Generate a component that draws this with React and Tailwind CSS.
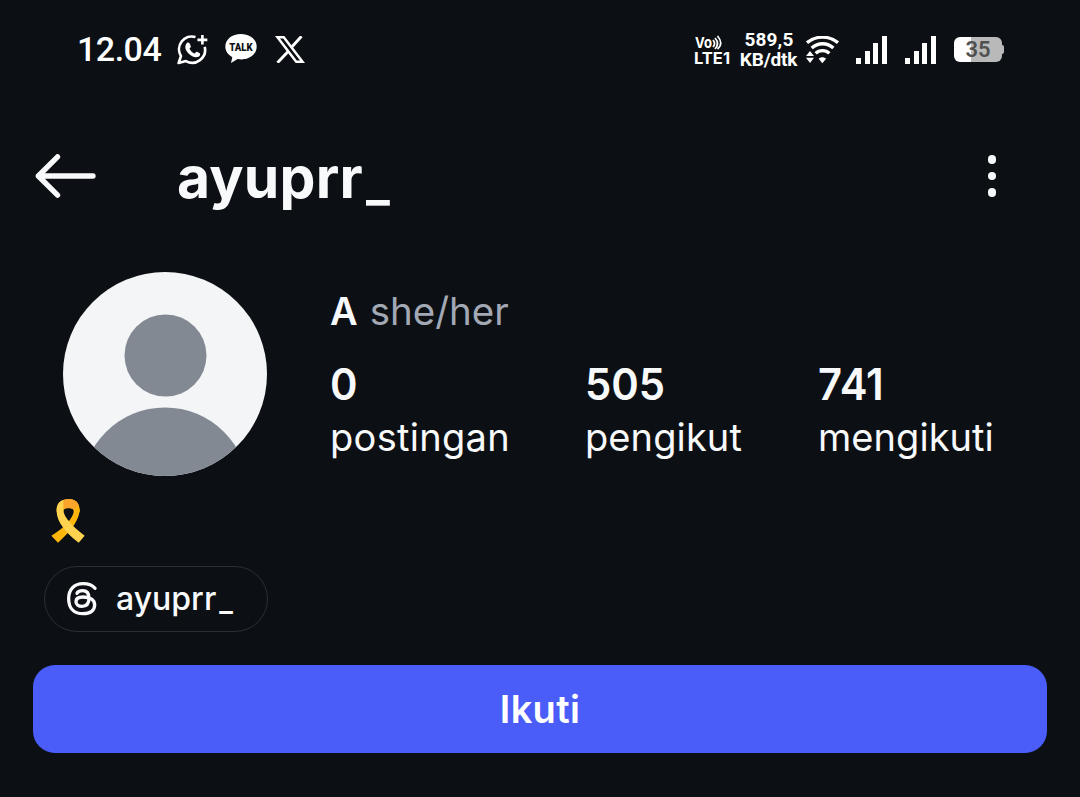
const stats = [
  { value: '0', label: 'postingan', width: 'w-[255px]', labelSpacing: 'tracking-[0.3px]' },
  { value: '505', label: 'pengikut', width: 'w-[233px]', labelSpacing: 'tracking-[0.1px]' },
  { value: '741', label: 'mengikuti', width: 'w-[200px]', labelSpacing: 'tracking-[0.05px]' },
];

function WhatsAppIcon() {
  return (
    <svg viewBox="0 0 94 92" className="h-[31px] w-[31px]" fill="none" stroke="white">
      <path d="M56 8 A39 39 0 0 0 12 66 L5 87 L27 81 A39 39 0 0 0 84 38" strokeWidth="8" strokeLinejoin="round" />
      <path d="M77 2 V31 M62 17 H92" strokeWidth="8" />
      <path
        d="M30 26 C32 24 36 24 38 27 L42 36 C43 39 38 42 38 44 C41 51 47 56 53 58 C56 58 57 52 61 53 L69 57 C72 60 69 66 65 68 C56 72 44 67 35 58 C26 48 21 37 30 26 Z"
        fill="white"
        stroke="none"
      />
    </svg>
  );
}

function TalkIcon() {
  return (
    <svg viewBox="0 0 96 90" className="h-[30px] w-[32px]" fill="white">
      <path d="M48 0 C21 0 1 16 1 38 C1 51 9 62 22 69 L18 87 L38 75 C70 81 95 63 95 38 C95 16 75 0 48 0 Z" />
      <text x="48" y="51" textAnchor="middle" textLength="70" lengthAdjust="spacingAndGlyphs" className="fill-[#0c1014] font-[Roboto] text-[35px] font-black">
        TALK
      </text>
    </svg>
  );
}

function XIcon() {
  return (
    <svg viewBox="0 0 90 82" className="h-[27px] w-[30px]" fill="none" stroke="white">
      <path d="M7 4 H26 L83 78 H64 Z" strokeWidth="7.5" />
      <path d="M80 1 L49 35 M40 46 L7 81" strokeWidth="9" />
    </svg>
  );
}

function WifiIcon() {
  return (
    <svg viewBox="0 0 99 84" className="h-[28px] w-[33px]" fill="none" stroke="white" strokeWidth="10">
      <path d="M3 20 C30 -2 69 -2 96 20" />
      <path d="M17 36 C36 19 64 19 82 36" />
      <path d="M29 52 C40 41 59 41 70 52" />
      <path d="M38 68 C44 62 54 62 60 68 L49 82 Z" fill="white" stroke="none" />
      <path d="M12 45 L24 60 H0 Z M0 65 H24 L12 81 Z" fill="white" stroke="none" />
    </svg>
  );
}

function SignalIcon() {
  return (
    <div className="flex h-7 w-[31px] items-end justify-between">
      <span className="h-1.5 w-[5px] bg-white" />
      <span className="h-[13px] w-[5px] bg-white" />
      <span className="h-[21px] w-[5px] bg-white" />
      <span className="h-7 w-[5px] bg-white" />
    </div>
  );
}

function ThreadsIcon() {
  return (
    <svg viewBox="0 0 93 102" className="h-[34px] w-[31px]" fill="none" stroke="#f8f9fa" strokeWidth="10" strokeLinecap="round">
      <path d="M84 19 C76 9 63 5 48 5 C22 5 5 22 5 50 C5 79 22 95 48 95 C70 95 83 85 83 69 C83 54 70 45 48 45 C34 45 27 51 27 59 C27 68 35 73 45 73 C58 73 66 65 66 49 C66 34 60 26 47 26 C38 26 32 29 30 34" />
    </svg>
  );
}

function RibbonIcon() {
  return (
    <svg viewBox="0 0 100 132" className="h-[44px] w-[34px]">
      <path d="M85 30 C85 61 62 93 20 131 L0 110 C30 92 46 76 53 66 C61 55 68 45 68 30 Z" fill="#ffb60c" />
      <path d="M16 38 C14 12 30 0 51 0 C72 0 87 12 85 40 L67 40 C69 31 64 28 52 28 C39 28 36 31 36 40 Z" fill="#ffb60c" />
      <path d="M36 4 C53 -4 76 1 82 18 L68 32 C62 26 43 26 36 31 Z" fill="#fba52c" />
      <path d="M16 38 C15 18 23 7 36 4 L36 31 C36 45 45 58 53 67 C65 82 80 95 100 110 L82 131 C40 98 17 67 16 38 Z" fill="#ffd34f" />
    </svg>
  );
}

function StatusBar() {
  return (
    <div className="flex h-[98px] items-center pr-[76px] pl-[77px] text-white">
      <span className="w-[100px] font-[Roboto] text-[34px] leading-none font-medium tracking-[-0.5px]">12.04</span>
      <WhatsAppIcon />
      <div className="ml-[17px]"><TalkIcon /></div>
      <div className="ml-[18px]"><XIcon /></div>

      <div className="ml-auto flex items-center pt-px">
        <svg viewBox="0 0 36 30" className="mr-[9px] h-[30px] w-9 overflow-visible font-[Inter] font-bold" fill="white">
          <text x="0" y="13" textLength="17" lengthAdjust="spacingAndGlyphs" className="text-[15px]">Vo</text>
          <path d="M18 5 Q21 8.5 18 12 M20 3 Q25 8.5 20 14 M22.5 1 Q29 8.5 22.5 14" fill="none" stroke="white" strokeWidth="1.7" />
          <text x="-1" y="28.5" textLength="36" lengthAdjust="spacingAndGlyphs" className="text-[16px]">LTE1</text>
        </svg>
        <div className="w-[58px] text-center font-[Roboto] text-[19px] leading-[20px] font-bold">
          <div className="tracking-[0.1px]">589,5</div>
          <div className="-ml-px tracking-[-0.2px]">KB/dtk</div>
        </div>
        <div className="ml-2"><WifiIcon /></div>
        <div className="ml-[17px]"><SignalIcon /></div>
        <div className="ml-[18px]"><SignalIcon /></div>
        <div className="ml-[18px] flex items-center">
          <div className="flex h-[25px] w-12 items-center justify-center rounded-[6px] bg-linear-to-r from-white from-36% to-[#b9b9b9] to-36% font-[Roboto] text-[22px] leading-none font-semibold text-[#505050]">
            35
          </div>
          <div className="h-[9px] w-[2px] rounded-r-[2px] bg-[#b9b9b9]" />
        </div>
      </div>
    </div>
  );
}

function Header() {
  return (
    <header className="mt-0.5 flex h-[152px] items-center pr-[84px] pl-[35px]">
      <svg viewBox="0 0 184 132" className="h-[44px] w-[61px]" fill="none" stroke="#f8f9fa" strokeWidth="16" strokeLinecap="round" strokeLinejoin="round">
        <path d="M68 8 L10 66 L68 124 M10 66 H175" />
      </svg>
      <h1 className="ml-[81px] pt-[3px] text-[57px] leading-none font-bold tracking-[0.2px]">
        ayuprr<span className="ml-[3px] align-[-2px] text-[50px] leading-none">_</span>
      </h1>
      <div className="ml-auto flex flex-col gap-2">
        <span className="h-[8.5px] w-[8.5px] rounded-full bg-[#f8f9fa]" />
        <span className="h-[8.5px] w-[8.5px] rounded-full bg-[#f8f9fa]" />
        <span className="h-[8.5px] w-[8.5px] rounded-full bg-[#f8f9fa]" />
      </div>
    </header>
  );
}

function Avatar() {
  return (
    <svg viewBox="0 0 204 204" className="h-[204px] w-[204px] shrink-0 rounded-full bg-[#f3f5f7]">
      <circle cx="102.5" cy="83.5" r="41" fill="#838993" />
      <circle cx="102" cy="219" r="83.5" fill="#838993" />
    </svg>
  );
}

export default function App() {
  return (
    <div className="flex h-[797px] w-[1080px] flex-col overflow-hidden bg-[#0c1014] font-['Inter',sans-serif] text-[#f8f9fa]">
      <StatusBar />
      <Header />

      <section className="mt-5 flex pl-[63px]">
        <Avatar />
        <div className="ml-[63px] pt-[15px]">
          <div className="flex items-baseline gap-3 leading-[48px]">
            <span className="text-[38px] font-semibold">A</span>
            <span className="text-[38.5px] text-[#a2a8b4]">she/her</span>
          </div>
          <div className="mt-[22px] flex">
            {stats.map((s) => (
              <div key={s.label} className={s.width}>
                <div className="origin-left scale-x-[0.96] text-[43.5px] leading-[54px] font-semibold">{s.value}</div>
                <div className={`text-[38px] leading-[52px] ${s.labelSpacing}`}>{s.label}</div>
              </div>
            ))}
          </div>
        </div>
      </section>

      <div className="mt-[23px] ml-[51px]"><RibbonIcon /></div>

      <div className="mt-[23px] ml-11 flex h-[66px] w-[224px] items-center rounded-full border border-[#2b2f35] pl-[22px]">
        <ThreadsIcon />
        <span className="ml-[18px] text-[32px] leading-none font-medium">
          ayuprr<span className="ml-[3px] align-[-1px] text-[29px] leading-none font-semibold">_</span>
        </span>
      </div>

      <button className="mt-[33px] ml-[33px] h-[88px] w-[1014px] rounded-[22px] bg-[#4a5df9] text-[38px] leading-none font-semibold tracking-[0.3px] text-white">
        Ikuti
      </button>
    </div>
  );
}
